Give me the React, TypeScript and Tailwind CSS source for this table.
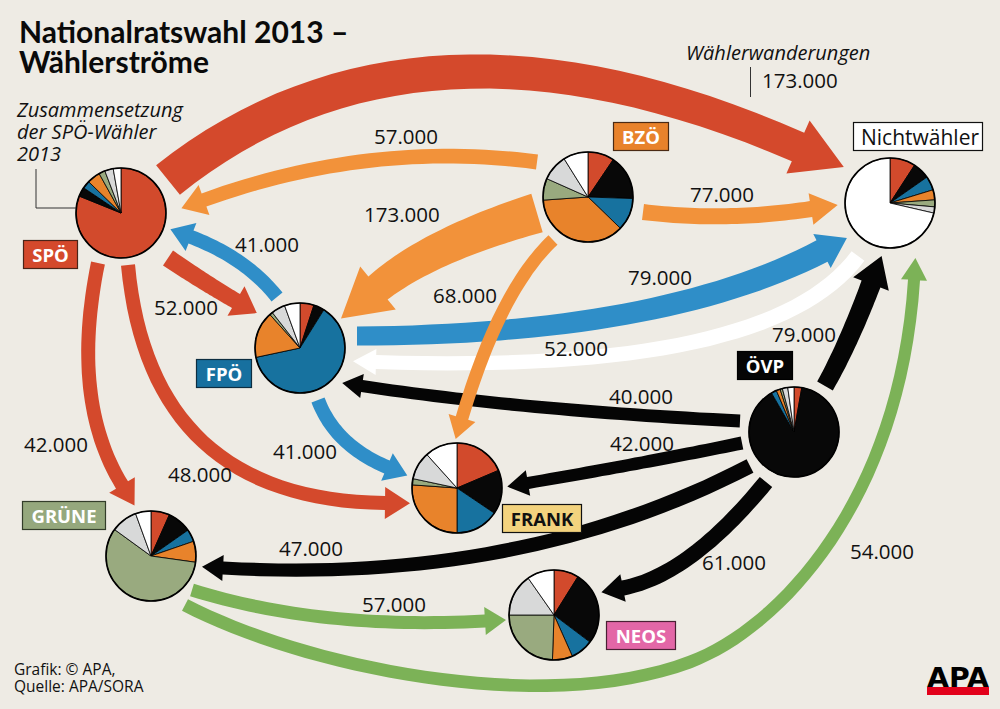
import React from 'react';

type Pt = [number, number];
type Seg = [Pt, Pt, Pt, Pt];

// arrow colours
const A = {
  red: '#d4492c',
  orange: '#f2923a',
  blue: '#2f8ec8',
  green: '#7cb257',
  black: '#050505',
  white: '#ffffff',
};

// pie colours
const P = {
  red: '#d24a2c',
  black: '#080808',
  blue: '#17729f',
  orange: '#e8832b',
  green: '#99aa7f',
  gray: '#d8d9d9',
  white: '#ffffff',
};

const quad = (p0: Pt, c: Pt, p3: Pt): Seg => [
  p0,
  [p0[0] + (2 / 3) * (c[0] - p0[0]), p0[1] + (2 / 3) * (c[1] - p0[1])],
  [p3[0] + (2 / 3) * (c[0] - p3[0]), p3[1] + (2 / 3) * (c[1] - p3[1])],
  p3,
];

const at = (s: Seg, t: number): Pt => {
  const u = 1 - t;
  const a = u * u * u, b = 3 * u * u * t, c = 3 * u * t * t, d = t * t * t;
  return [
    a * s[0][0] + b * s[1][0] + c * s[2][0] + d * s[3][0],
    a * s[0][1] + b * s[1][1] + c * s[2][1] + d * s[3][1],
  ];
};

const tan = (s: Seg, t: number): Pt => {
  const u = 1 - t;
  const a = 3 * u * u, b = 6 * u * t, c = 3 * t * t;
  const dx = a * (s[1][0] - s[0][0]) + b * (s[2][0] - s[1][0]) + c * (s[3][0] - s[2][0]);
  const dy = a * (s[1][1] - s[0][1]) + b * (s[2][1] - s[1][1]) + c * (s[3][1] - s[2][1]);
  const l = Math.hypot(dx, dy) || 1;
  return [dx / l, dy / l];
};

function arrowPoints(segs: Seg[], w0: number, w1: number, hl: number, hw: number) {
  const N = 32;
  const total = segs.length * N;
  const left: Pt[] = [];
  const right: Pt[] = [];
  segs.forEach((s, i) => {
    for (let j = i === 0 ? 0 : 1; j <= N; j++) {
      const t = j / N;
      const p = at(s, t);
      const d = tan(s, t);
      const w = (w0 + (w1 - w0) * ((i * N + j) / total)) / 2;
      left.push([p[0] - d[1] * w, p[1] + d[0] * w]);
      right.push([p[0] + d[1] * w, p[1] - d[0] * w]);
    }
  });
  const last = segs[segs.length - 1];
  const b = last[3];
  const d = tan(last, 1);
  const tip: Pt = [b[0] + d[0] * hl, b[1] + d[1] * hl];
  const pts: Pt[] = [
    ...left,
    [b[0] - d[1] * hw, b[1] + d[0] * hw],
    tip,
    [b[0] + d[1] * hw, b[1] - d[0] * hw],
    ...right.reverse(),
  ];
  return pts.map((p) => `${p[0].toFixed(1)},${p[1].toFixed(1)}`).join(' ');
}

interface Flow {
  segs: Seg[];
  w0: number;
  w1: number;
  hl: number;
  hw: number;
  color: string;
}

const FLOWS: Flow[] = [
  // GRÜNE -> Nichtwähler 54.000
  {
    segs: [
      [[185, 605], [300, 665], [540, 718], [690, 662]],
      [[690, 662], [780, 628], [900, 500], [914, 280]],
    ],
    w0: 13, w1: 12, hl: 22, hw: 13, color: A.green,
  },
  // GRÜNE -> NEOS 57.000
  { segs: [quad([192, 590], [320, 630], [485, 621])], w0: 13, w1: 13, hl: 21, hw: 14, color: A.green },
  // ÖVP -> GRÜNE 47.000
  { segs: [quad([750, 466], [520, 585], [223, 568])], w0: 15, w1: 13, hl: 21, hw: 13, color: A.black },
  // ÖVP -> NEOS 61.000
  { segs: [quad([766, 482], [690, 575], [623, 588])], w0: 16, w1: 15, hl: 22, hw: 14, color: A.black },
  // ÖVP -> FRANK 42.000
  { segs: [quad([742, 443], [650, 462], [528, 483])], w0: 13, w1: 12, hl: 21, hw: 13, color: A.black },
  // ÖVP -> FPÖ 40.000
  { segs: [quad([740, 421], [520, 410], [362, 386])], w0: 13, w1: 12, hl: 20, hw: 12, color: A.black },
  // ÖVP -> Nichtwähler 79.000
  { segs: [quad([825, 386], [848, 345], [871, 284])], w0: 18, w1: 20, hl: 30, hw: 19, color: A.black },
  // SPÖ -> FRANK 48.000
  { segs: [quad([128, 265], [150, 500], [385, 503])], w0: 14, w1: 14, hl: 25, hw: 16, color: A.red },
  // SPÖ -> GRÜNE 42.000
  { segs: [quad([98, 263], [70, 400], [122, 485])], w0: 14, w1: 14, hl: 24, hw: 15, color: A.red },
  // SPÖ -> FPÖ 52.000
  { segs: [quad([168, 258], [205, 283], [236, 301])], w0: 18, w1: 16, hl: 24, hw: 17, color: A.red },
  // FPÖ -> FRANK 41.000
  { segs: [quad([318, 400], [335, 445], [387, 467])], w0: 14, w1: 14, hl: 22, hw: 15, color: A.blue },
  // FPÖ -> SPÖ 41.000
  { segs: [quad([277, 297], [246, 258], [191, 237])], w0: 14, w1: 14, hl: 22, hw: 15, color: A.blue },
  // Nichtwähler -> FPÖ 52.000
  { segs: [quad([858, 256], [770, 375], [376, 362])], w0: 16, w1: 14, hl: 23, hw: 13, color: A.white },
  // FPÖ -> Nichtwähler 79.000
  { segs: [quad([357, 336], [660, 335], [822, 251])], w0: 19, w1: 24, hl: 28, hw: 19, color: A.blue },
  // BZÖ -> FPÖ 173.000
  { segs: [quad([537, 213], [430, 245], [378, 288])], w0: 40, w1: 30, hl: 48, hw: 28, color: A.orange },
  // BZÖ -> SPÖ 57.000
  { segs: [quad([537, 162], [370, 140], [204, 200])], w0: 15, w1: 14, hl: 24, hw: 16, color: A.orange },
  // BZÖ -> Nichtwähler 77.000
  { segs: [quad([643, 212], [725, 222], [811, 209])], w0: 16, w1: 16, hl: 27, hw: 16, color: A.orange },
  // BZÖ -> FRANK 68.000
  { segs: [quad([553, 240], [500, 290], [462, 418])], w0: 13, w1: 13, hl: 22, hw: 14, color: A.orange },
  // SPÖ -> Nichtwähler 173.000
  { segs: [quad([168, 180], [417, -19], [798, 147])], w0: 38, w1: 31, hl: 50, hw: 29, color: A.red },
];

type Slice = [number, string];

interface PieData {
  cx: number;
  cy: number;
  slices: Slice[];
}

const ORDER = [P.red, P.black, P.blue, P.orange, P.green, P.gray, P.white];
const mk = (ends: number[]): Slice[] => ends.map((e, i) => [e, ORDER[i]]);

const PIES: PieData[] = [
  { cx: 121, cy: 213, slices: mk([292, 304, 314, 331, 339, 350, 360]) }, // SPÖ
  { cx: 588, cy: 197, slices: mk([34, 92, 134, 266, 294, 328, 360]) }, // BZÖ
  { cx: 890, cy: 203, slices: mk([33, 55, 73, 86, 95, 103, 360]) }, // Nichtwähler
  { cx: 300, cy: 348, slices: mk([18, 32, 258, 318, 322, 340, 360]) }, // FPÖ
  { cx: 794, cy: 432, slices: mk([10, 330, 337, 342, 345, 352, 360]) }, // ÖVP
  { cx: 457, cy: 488, slices: mk([67, 124, 180, 274, 282, 318, 360]) }, // FRANK
  { cx: 151, cy: 556, slices: mk([24, 55, 71, 98, 306, 340, 360]) }, // GRÜNE
  { cx: 554, cy: 615, slices: mk([32, 127, 156, 182, 270, 325, 360]) }, // NEOS
];

const R = 45;

const pol = (cx: number, cy: number, deg: number): Pt => {
  const a = (deg * Math.PI) / 180;
  return [cx + R * Math.sin(a), cy - R * Math.cos(a)];
};

function Pie({ cx, cy, slices }: PieData) {
  let start = 0;
  return (
    <g>
      <circle cx={cx} cy={cy} r={R} fill={P.white} />
      {slices.map(([end, color], i) => {
        const s = pol(cx, cy, start);
        const e = pol(cx, cy, end);
        const large = end - start > 180 ? 1 : 0;
        const d = `M${cx},${cy} L${s[0].toFixed(2)},${s[1].toFixed(2)} A${R},${R} 0 ${large} 1 ${e[0].toFixed(2)},${e[1].toFixed(2)} Z`;
        start = end;
        return <path key={i} d={d} fill={color} stroke="#000" strokeWidth={0.8} strokeLinejoin="round" />;
      })}
      <circle cx={cx} cy={cy} r={R} fill="none" stroke="#000" strokeWidth={1.6} />
    </g>
  );
}

interface Tag {
  x: number;
  y: number;
  w: number;
  text: string;
  fill: string;
  ink: string;
  edge: string;
}

const TAGS: Tag[] = [
  { x: 23, y: 240, w: 54, text: 'SPÖ', fill: '#d4492c', ink: '#fff', edge: '#4a2418' },
  { x: 613, y: 122, w: 55, text: 'BZÖ', fill: '#e8822b', ink: '#fff', edge: '#4a2a14' },
  { x: 196, y: 359, w: 55, text: 'FPÖ', fill: '#17709f', ink: '#fff', edge: '#0d2d40' },
  { x: 737, y: 351, w: 55, text: 'ÖVP', fill: '#050505', ink: '#fff', edge: '#000' },
  { x: 502, y: 504, w: 79, text: 'FRANK', fill: '#f3d37e', ink: '#111', edge: '#111' },
  { x: 22, y: 501, w: 83, text: 'GRÜNE', fill: '#95a87d', ink: '#fff', edge: '#333d2a' },
  { x: 606, y: 621, w: 69, text: 'NEOS', fill: '#e367a7', ink: '#fff', edge: '#4a2034' },
];

const NUMBERS: { x: number; y: number; t: string }[] = [
  { x: 762, y: 88, t: '173.000' },
  { x: 374, y: 144, t: '57.000' },
  { x: 364, y: 222, t: '173.000' },
  { x: 690, y: 202, t: '77.000' },
  { x: 235, y: 252, t: '41.000' },
  { x: 154, y: 315, t: '52.000' },
  { x: 433, y: 303, t: '68.000' },
  { x: 628, y: 285, t: '79.000' },
  { x: 772, y: 342, t: '79.000' },
  { x: 544, y: 356, t: '52.000' },
  { x: 609, y: 404, t: '40.000' },
  { x: 610, y: 451, t: '42.000' },
  { x: 273, y: 459, t: '41.000' },
  { x: 24, y: 452, t: '42.000' },
  { x: 168, y: 482, t: '48.000' },
  { x: 279, y: 556, t: '47.000' },
  { x: 362, y: 612, t: '57.000' },
  { x: 702, y: 570, t: '61.000' },
  { x: 850, y: 559, t: '54.000' },
];

const SANS = "'Open Sans', 'Noto Sans', sans-serif";

export default function App() {
  return (
    <div className="relative h-[709px] w-[1000px] overflow-hidden bg-[#eeebe4] font-['Open_Sans','Noto_Sans',sans-serif] text-[#111]">
      <svg className="absolute inset-0" width={1000} height={709} viewBox="0 0 1000 709">
        {FLOWS.map((f, i) => (
          <polygon key={i} points={arrowPoints(f.segs, f.w0, f.w1, f.hl, f.hw)} fill={f.color} />
        ))}

        {PIES.map((p, i) => (
          <Pie key={i} {...p} />
        ))}

        {/* callout lines */}
        <polyline points="36,169 36,208 76,208" fill="none" stroke="#333" strokeWidth={1} />
        <line x1={750.5} y1={67} x2={750.5} y2={97} stroke="#333" strokeWidth={1} />

        <g fontFamily={SANS} fontStyle="italic" fontSize={20} fill="#111">
          <text x={17} y={117}>Zusammensetzung</text>
          <text x={17} y={139}>der SPÖ-Wähler</text>
          <text x={17} y={161}>2013</text>
          <text x={686} y={60}>Wählerwanderungen</text>
        </g>

        <g fontFamily={SANS} fontSize={20.5} fill="#111">
          {NUMBERS.map((n, i) => (
            <text key={i} x={n.x} y={n.y}>
              {n.t}
            </text>
          ))}
        </g>

        {/* Nichtwähler tag */}
        <rect x={853.5} y={122.5} width={129} height={28} fill="#fff" stroke="#111" strokeWidth={1.2} />
        <text x={861} y={145} fontFamily={SANS} fontSize={21} fill="#111">
          Nichtwähler
        </text>

        {TAGS.map((t) => (
          <g key={t.text}>
            <rect x={t.x + 0.5} y={t.y + 0.5} width={t.w} height={28} fill={t.fill} stroke={t.edge} strokeWidth={1.2} />
            <text
              x={t.x + t.w / 2 + 0.5}
              y={t.y + 21.5}
              textAnchor="middle"
              fontFamily={SANS}
              fontWeight={700}
              fontSize={18.5}
              fill={t.ink}
            >
              {t.text}
            </text>
          </g>
        ))}

        {/* APA logo */}
        <rect x={927} y={687} width={62} height={8} fill="#e2001a" />
        <text
          x={927}
          y={687}
          textLength={62}
          lengthAdjust="spacingAndGlyphs"
          fontFamily="'DejaVu Sans', sans-serif"
          fontWeight={700}
          fontSize={26}
          fill="#000"
        >
          APA
        </text>
      </svg>

      <div className="pointer-events-none relative flex h-full flex-col justify-between pt-[16px] pb-[14px] pl-[14px]">
        <h1 className="pl-[5px] font-['Lato',sans-serif] text-[30px] font-bold leading-[30px] text-[#0a0a0a]">
          Nationalratswahl 2013 –
          <br />
          Wählerströme
        </h1>
        <p className="text-[15.5px] leading-[17px] text-[#111]">
          Grafik: © APA,
          <br />
          Quelle: APA/SORA
        </p>
      </div>
    </div>
  );
}
